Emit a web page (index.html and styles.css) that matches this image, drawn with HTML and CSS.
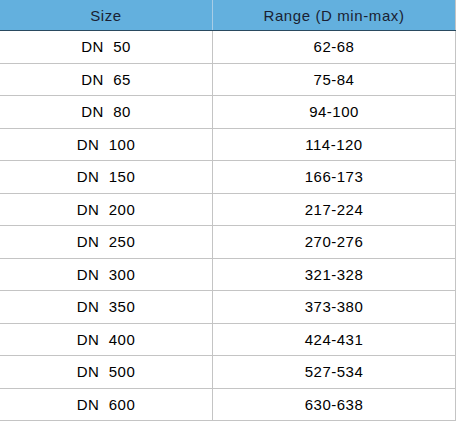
FILE: index.html
```html
<!DOCTYPE html>
<html>
<head>
<meta charset="utf-8">
<link rel="stylesheet" href="styles.css">
</head>
<body>
<table class="sizes">
  <thead>
    <tr><th class="c1">Size</th><th class="c2">Range (D min-max)</th></tr>
  </thead>
  <tbody>
    <tr><td>DN&nbsp; 50</td><td>62-68</td></tr>
    <tr><td>DN&nbsp; 65</td><td>75-84</td></tr>
    <tr><td>DN&nbsp; 80</td><td>94-100</td></tr>
    <tr><td>DN&nbsp; 100</td><td>114-120</td></tr>
    <tr><td>DN&nbsp; 150</td><td>166-173</td></tr>
    <tr><td>DN&nbsp; 200</td><td>217-224</td></tr>
    <tr><td>DN&nbsp; 250</td><td>270-276</td></tr>
    <tr><td>DN&nbsp; 300</td><td>321-328</td></tr>
    <tr><td>DN&nbsp; 350</td><td>373-380</td></tr>
    <tr><td>DN&nbsp; 400</td><td>424-431</td></tr>
    <tr><td>DN&nbsp; 500</td><td>527-534</td></tr>
    <tr><td>DN&nbsp; 600</td><td>630-638</td></tr>
  </tbody>
</table>
</body>
</html>
```
FILE: styles.css
```css
html, body {
  margin: 0;
  padding: 0;
  background: #ffffff;
}
.sizes {
  border-collapse: collapse;
  width: 456px;
  font-family: "Liberation Sans", Arial, sans-serif;
  font-size: 15px;
  color: #000;
}
.sizes th {
  background: #63b0de;
  color: #1a1f33;
  font-weight: normal;
  height: 30px;
  padding: 0;
  text-align: center;
  border-bottom: 1px solid #2a4a60;
  letter-spacing: 0.6px;
}
.sizes th.c1 {
  width: 212px;
  border-right: 1px solid #a8cde6;
}
.sizes td {
  height: 31.5px;
  padding: 0;
  text-align: center;
  border-bottom: 1px solid #c4c4c4;
  letter-spacing: 0.5px;
}
.sizes td:first-child {
  border-right: 1px solid #c4c4c4;
}
.sizes td:last-child,
.sizes th.c2 {
  border-right: 1px solid #c4c4c4;
}
```
